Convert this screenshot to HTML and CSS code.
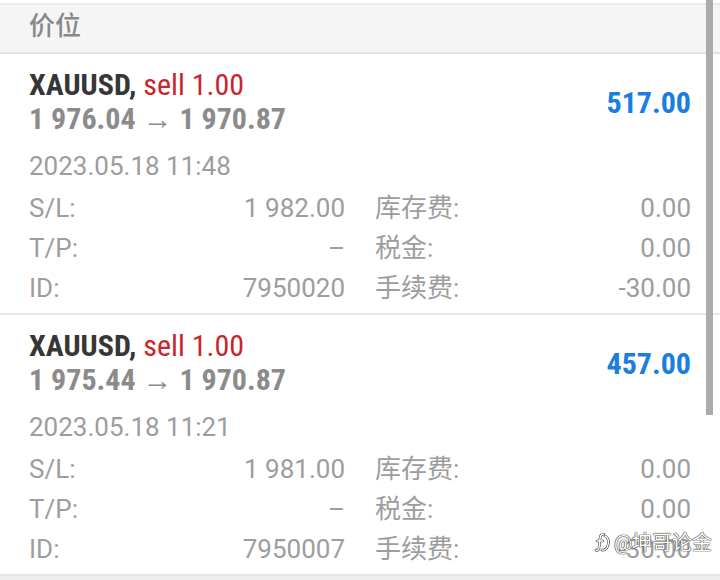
FILE: index.html
```html
<!DOCTYPE html>
<html lang="zh">
<head>
  <meta charset="UTF-8" />
  <title>持仓</title>
  <link rel="stylesheet" href="styles.css">
</head>
<body>
  <div class="tab">价位</div>

  <div class="pos">
    <div class="pos-head">
      <div class="pos-title">
        <div class="sym"><b>XAUUSD,</b> <span class="sell">sell 1.00</span></div>
        <div class="prices">1 976.04 → 1 970.87</div>
      </div>
      <div class="profit">517.00</div>
    </div>
    <div class="time">2023.05.18 11:48</div>
    <div class="details">
      <div class="d"><span>S/L:</span><span>1 982.00</span></div>
      <div class="d"><span>库存费:</span><span>0.00</span></div>
      <div class="d"><span>T/P:</span><span>–</span></div>
      <div class="d"><span>税金:</span><span>0.00</span></div>
      <div class="d"><span>ID:</span><span>7950020</span></div>
      <div class="d"><span>手续费:</span><span>-30.00</span></div>
    </div>
  </div>

  <div class="pos">
    <div class="pos-head">
      <div class="pos-title">
        <div class="sym"><b>XAUUSD,</b> <span class="sell">sell 1.00</span></div>
        <div class="prices">1 975.44 → 1 970.87</div>
      </div>
      <div class="profit">457.00</div>
    </div>
    <div class="time">2023.05.18 11:21</div>
    <div class="details">
      <div class="d"><span>S/L:</span><span>1 981.00</span></div>
      <div class="d"><span>库存费:</span><span>0.00</span></div>
      <div class="d"><span>T/P:</span><span>–</span></div>
      <div class="d"><span>税金:</span><span>0.00</span></div>
      <div class="d"><span>ID:</span><span>7950007</span></div>
      <div class="d"><span>手续费:</span><span>-30.00</span></div>
    </div>
  </div>

  <div class="more"></div>

  <div class="scrollbar"></div>

  <div class="watermark">
    <svg width="16" height="22" viewBox="0 0 16 22">
      <g fill="none" stroke-linecap="round">
        <path class="wm-out" d="M10 3 C7 3 6 5 6 8 L5 17 C5 19 3 20 2 19 M3 10 L9 10 M11 5 C14.5 6.5 15.5 11 13.5 15.5 C12.5 18 10 19.5 8 19"/>
        <path class="wm-in" d="M10 3 C7 3 6 5 6 8 L5 17 C5 19 3 20 2 19 M3 10 L9 10 M11 5 C14.5 6.5 15.5 11 13.5 15.5 C12.5 18 10 19.5 8 19"/>
      </g>
    </svg>
    <span>@坤哥论金</span>
  </div>
</body>
</html>
```

FILE: styles.css
```css
body {
  margin: 0;
  width: 720px;
  height: 580px;
  overflow: hidden;
  position: relative;
  background: #fff;
  font-family: Roboto, "Noto Sans CJK SC", sans-serif;
}

.tab {
  margin-top: 3px;
  height: 47px;
  padding-left: 29px;
  background: #f5f5f5;
  border-top: 2px solid #eaeaea;
  border-bottom: 2px solid #e2e2e2;
  font-size: 26px;
  line-height: 42px;
  font-weight: 500;
  color: #888;
}

.pos {
  padding: 15px 29px 5px;
  border-bottom: 2px solid #e6e6e6;
}

.pos-head {
  display: flex;
  align-items: center;
  justify-content: space-between;
}

/* narrow face, like the terminal app */
.sym,
.prices,
.profit {
  font-family: "Roboto Condensed", "Liberation Sans Narrow", Roboto, sans-serif;
}

.sym {
  font-size: 30px;
  line-height: 32px;
  color: #363636;
}

.sell {
  color: #c9252c;
}

.prices {
  margin-top: 1px;
  font-size: 30px;
  line-height: 34px;
  font-weight: bold;
  color: #8b8b8b;
}

.profit {
  font-size: 30px;
  font-weight: bold;
  color: #1a7de0;
}

.time {
  margin-top: 15px;
  font-size: 26px;
  line-height: 30px;
  color: #9d9d9d;
}

.details {
  margin-top: 7px;
  display: grid;
  grid-template-columns: 1fr 1fr;
  column-gap: 30px;
  font-size: 26px;
  line-height: 40px;
  color: #9d9d9d;
}

.d {
  display: flex;
  justify-content: space-between;
}

.more {
  height: 20px;
  background: #eeeeee;
}

.scrollbar {
  position: absolute;
  left: 706px;
  top: 0;
  width: 7px;
  height: 415px;
  background: #ababab;
}

.watermark {
  position: absolute;
  right: 8px;
  bottom: 24px;
  display: flex;
  align-items: center;
  gap: 4px;
  font-size: 20px;
  color: #fff;
  text-shadow: 0 0 1px #333, 0 0 1px #333, 0 0 1px #333;
}

.wm-out {
  stroke: #444;
  stroke-width: 2.6;
}

.wm-in {
  stroke: #fff;
  stroke-width: 1.4;
}
```
